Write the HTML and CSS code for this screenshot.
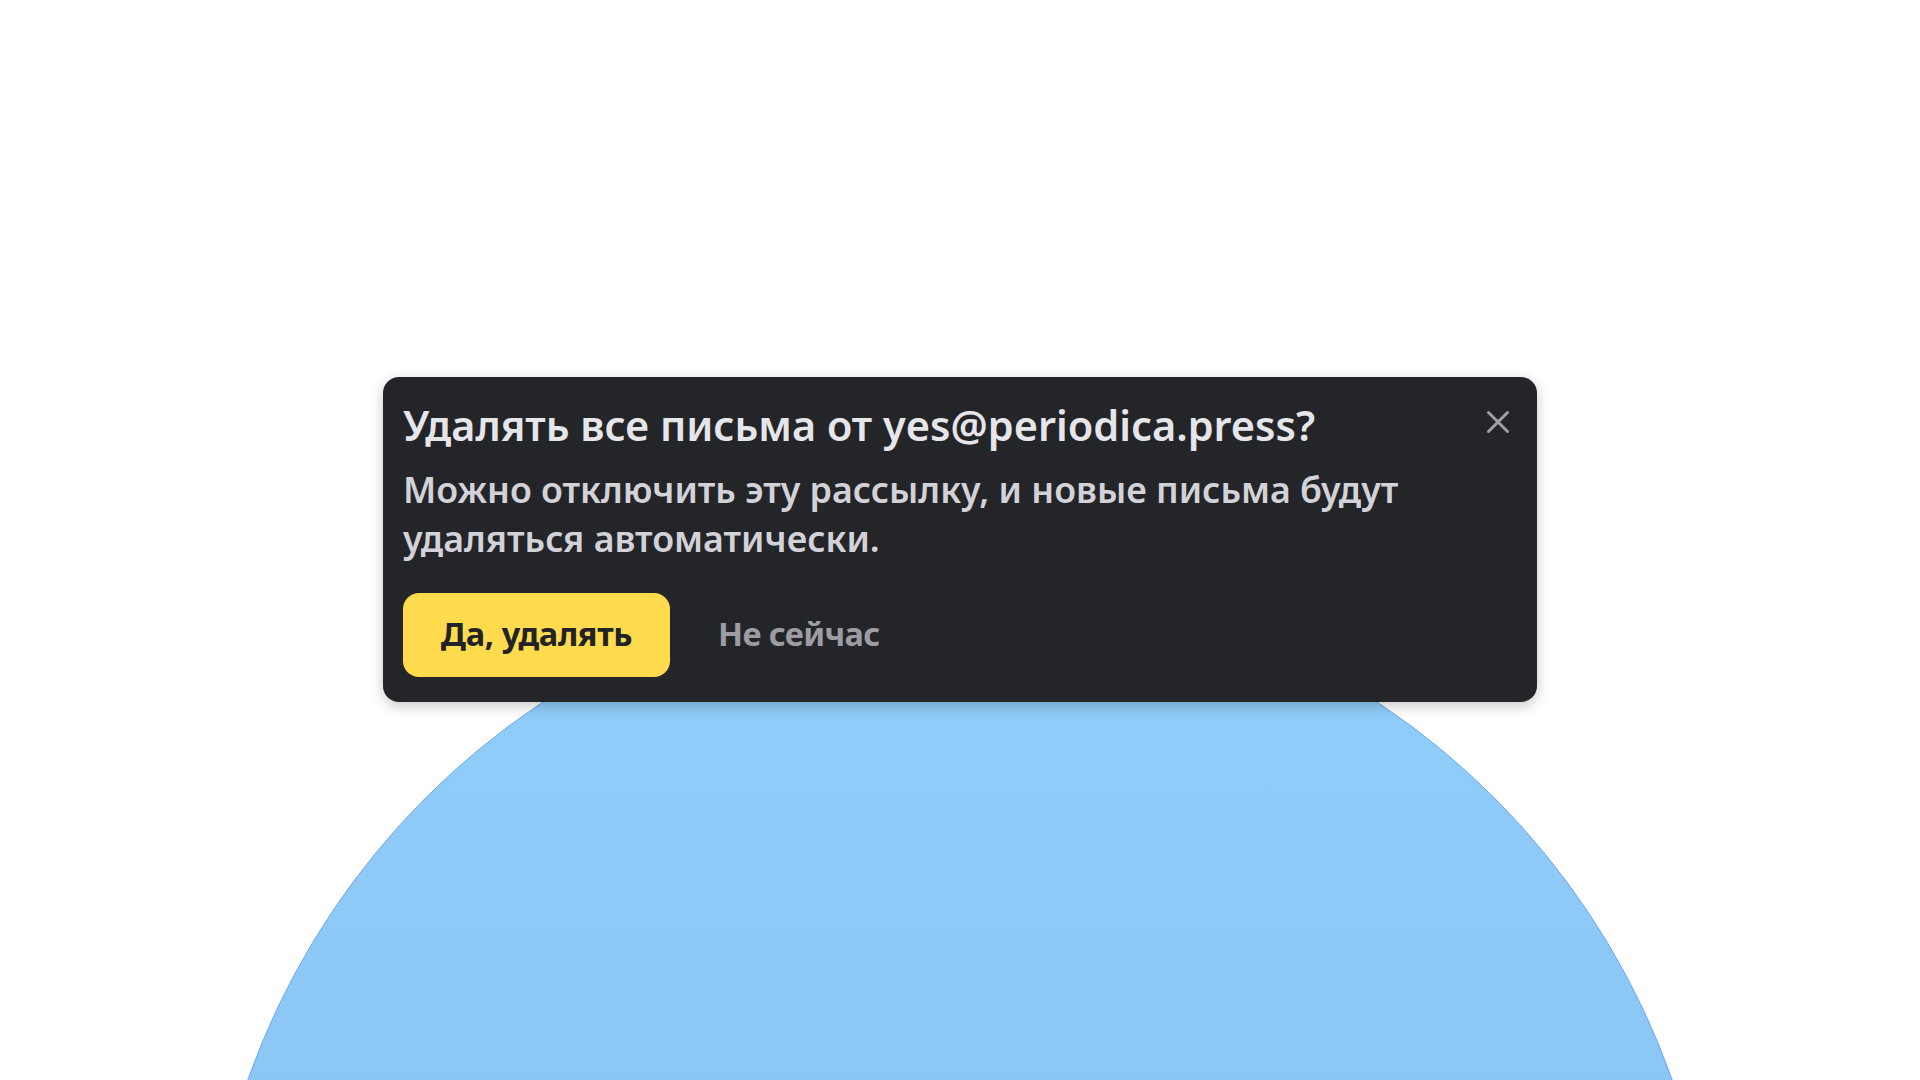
FILE: index.html
```html
<!DOCTYPE html>
<html lang="ru">
<head>
<meta charset="utf-8">
<title>Удалять все письма</title>
<link rel="stylesheet" href="styles.css">
</head>
<body>
<div class="stage">
  <div class="blob"></div>
  <div class="dialog">
    <div class="dialog-head">
      <h1 class="dialog-title">Удалять все письма от yes@periodica.press?</h1>
      <button class="close" aria-label="Закрыть">
        <svg width="26" height="26" viewBox="0 0 26 26"><path d="M3.5 3.5 L22.5 22.5 M22.5 3.5 L3.5 22.5" stroke="#a0a0a6" stroke-width="3" stroke-linecap="round" fill="none"/></svg>
      </button>
    </div>
    <p class="dialog-text">Можно отключить эту рассылку, и новые письма будут удаляться автоматически.</p>
    <div class="dialog-actions">
      <button class="btn-primary">Да, удалять</button>
      <button class="btn-link">Не сейчас</button>
    </div>
  </div>
</div>
</body>
</html>
```
FILE: styles.css
```css
html, body {
  margin: 0;
  padding: 0;
  background: #ffffff;
}
.stage {
  position: relative;
  width: 1920px;
  height: 1080px;
  overflow: hidden;
  padding-top: 377px;
  box-sizing: border-box;
  font-family: "Noto Sans", "Open Sans", sans-serif;
}
.blob {
  position: absolute;
  left: 204px;
  top: 576px;
  width: 1512px;
  height: 1512px;
  border-radius: 50%;
  box-sizing: border-box;
  border: 1px solid #6fa7f2;
  background: linear-gradient(180deg, #92cefa 0%, #8ac5f5 40%, #86c2f3 100%);
}
.dialog {
  position: relative;
  z-index: 1;
  width: 1154px;
  height: 325px;
  margin: 0 auto;
  box-sizing: border-box;
  padding: 24px 20px 25px 20px;
  background: #242528;
  border-radius: 16px;
  box-shadow: 0 4px 14px rgba(0, 0, 0, 0.22);
  display: flex;
  flex-direction: column;
}
.dialog-head {
  display: flex;
  align-items: flex-start;
  justify-content: space-between;
}
.dialog-title {
  margin: 0;
  font-size: 41.5px;
  line-height: 48px;
  font-weight: 600;
  color: #e6e6ea;
  letter-spacing: 0;
}
.close {
  margin: 8px 6px 0 0;
  padding: 0;
  width: 26px;
  height: 26px;
  border: 0;
  background: transparent;
  display: flex;
}
.dialog-text {
  margin: 16px 0 0 0;
  width: 1060px;
  font-size: 35.8px;
  line-height: 49px;
  font-weight: 600;
  color: #d2d2d8;
  letter-spacing: 0;
}
.dialog-actions {
  margin-top: auto;
  display: flex;
  align-items: center;
}
.btn-primary {
  height: 84px;
  width: 267px;
  padding: 0 0 3px 0;
  border: 0;
  border-radius: 16px;
  background: #ffdb4d;
  color: #222326;
  font-family: inherit;
  font-size: 32.5px;
  font-weight: 700;
  letter-spacing: -0.3px;
}
.btn-link {
  margin-left: 48px;
  padding: 0 0 3px 0;
  border: 0;
  background: transparent;
  color: #9c9ca2;
  font-family: inherit;
  font-size: 32.5px;
  font-weight: 700;
  letter-spacing: -0.6px;
}
```
